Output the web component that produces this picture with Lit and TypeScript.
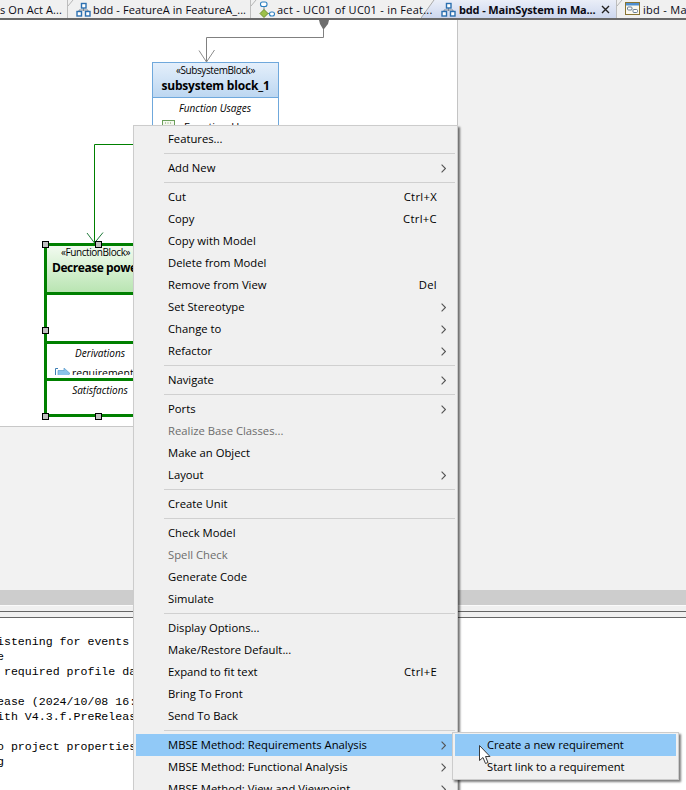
import { LitElement, html, css, svg } from "lit";
import { customElement } from "lit/decorators.js";

type Entry = { t?: string; k?: string; sub?: boolean; off?: boolean; hi?: boolean; sep?: boolean };

const MENU: Entry[] = [
  { t: "Features..." }, { sep: true },
  { t: "Add New", sub: true }, { sep: true },
  { t: "Cut", k: "Ctrl+X" }, { t: "Copy", k: "Ctrl+C" }, { t: "Copy with Model" },
  { t: "Delete from Model" }, { t: "Remove from View", k: "Del" },
  { t: "Set Stereotype", sub: true }, { t: "Change to", sub: true }, { t: "Refactor", sub: true }, { sep: true },
  { t: "Navigate", sub: true }, { sep: true },
  { t: "Ports", sub: true }, { t: "Realize Base Classes...", off: true }, { t: "Make an Object" }, { t: "Layout", sub: true }, { sep: true },
  { t: "Create Unit" }, { sep: true },
  { t: "Check Model" }, { t: "Spell Check", off: true }, { t: "Generate Code" }, { t: "Simulate" }, { sep: true },
  { t: "Display Options..." }, { t: "Make/Restore Default..." }, { t: "Expand to fit text", k: "Ctrl+E" },
  { t: "Bring To Front" }, { t: "Send To Back" }, { sep: true },
  { t: "MBSE Method: Requirements Analysis", sub: true, hi: true },
  { t: "MBSE Method: Functional Analysis", sub: true },
  { t: "MBSE Method: View and Viewpoint", sub: true },
];

const CONSOLE = [
  "istening for events",
  "e",
  " required profile da",
  "",
  "ease (2024/10/08 16:",
  "ith V4.3.f.PreReleas",
  "",
  "o project properties",
  "g",
];

const bddIcon = html`<svg class="ico" viewBox="0 0 15 15" width="15" height="15">
  <path d="M7.5 6v3M3 9.5V8h9v1.5" fill="none" stroke="#7a8794" stroke-width="1"/>
  <rect x="5.5" y="1.5" width="4.5" height="4.5" fill="#fff" stroke="#2b6fb0" stroke-width="1.4"/>
  <rect x="1" y="9.5" width="4.5" height="4.5" fill="#fff" stroke="#2b6fb0" stroke-width="1.4"/>
  <rect x="9.5" y="9.5" width="4.5" height="4.5" fill="#fff" stroke="#2b6fb0" stroke-width="1.4"/>
</svg>`;

const actIcon = html`<svg class="ico" viewBox="0 0 16 17" width="16" height="17">
  <path d="M5 5v4M8 12.5h3" stroke="#7a8794" fill="none"/>
  <rect x="1.5" y="1" width="6.5" height="4.5" rx="2" fill="#fff" stroke="#2b7fc0" stroke-width="1.1"/>
  <path d="M5 8.5 9 12.5 5 16.500 1 12.500Z" fill="#9cc04a" stroke="#6d8f2a"/>
  <rect x="10.500" y="11" width="5" height="4" rx="2" fill="#fff" stroke="#2b7fc0" stroke-width="1.1"/>
</svg>`;

const ibdIcon = html`<svg class="ico" viewBox="0 0 15 14" width="15" height="14">
  <rect x=".5" y=".5" width="14" height="12" fill="#fbf8ee" stroke="#8a7430"/>
  <rect x="1" y="1" width="13" height="2.500" fill="#4f8fd0"/>
  <rect x="2.500" y="5" width="4.500" height="3" rx="1" fill="#fff" stroke="#58708a" stroke-width=".9"/>
  <rect x="8" y="7.500" width="4.500" height="3" rx="1" fill="#fff" stroke="#58708a" stroke-width=".9"/>
</svg>`;

const chevron = svg`<path d="M.6.6 4.4 4.5.6 8.4" fill="none" stroke="#555" stroke-width="1.100"/>`;

@customElement("tab-strip")
class TabStrip extends LitElement {
  static styles = css`
    :host { display: flex; height: 18px; border-bottom: 2px solid #696969; background: #f0f0f0; overflow: hidden;
      font: 11px "Open Sans", sans-serif; letter-spacing: .08px; color: #0a0a14; white-space: nowrap; }
    .tab { position: relative; box-sizing: border-box; height: 18px; display: flex; align-items: center; flex: none; }
    .a { width: 67px; }
    .b { width: 183px; padding-left: 8px; border-left: 1px solid #bdbdbd; }
    .c { width: 171px; padding-left: 8px; border-left: 1px solid #bdbdbd; letter-spacing: .25px; z-index: 1; }
    .d { width: 195px; padding-left: 20px; font-weight: 700; letter-spacing: -.15px;
      background: linear-gradient(#eaeef8, #cdd7ee); }
    .e { flex: 1; padding-left: 8px; border-left: 1px solid #bdbdbd; overflow: hidden; letter-spacing: .3px; }
    .ico { flex: none; margin-right: 2px; }
    .d .ico, .e .ico { margin-right: 3px; }
    .x { margin-left: 5px; flex: none; }
    .tick { position: absolute; left: 0; top: 0; }
    .slant { position: absolute; left: 0; top: 0; }
  `;
  render() {
    const tick = html`<svg class="tick" width="6" height="7"><path d="M0 6 5 0" stroke="#b5b5b5" fill="none"/></svg>`;
    return html`
      <div class="tab a"><span>s On Act A...</span></div>
      <div class="tab b">${tick}${bddIcon}<span>bdd - FeatureA in FeatureA_...</span></div>
      <div class="tab c">${tick}${actIcon}<span>act - UC01 of UC01 - in Feat...</span></div>
      <div class="tab d">
        <svg class="slant" width="14" height="18"><path d="M0 0H13L0 18Z" fill="#f0f0f0"/><path d="M0 18 13 0" stroke="#a9a9a9" fill="none"/></svg>
        ${bddIcon}<span>bdd - MainSystem in Ma...</span>
        <svg class="x" width="9" height="9" viewBox="0 0 9 9"><path d="M1 1 8 8M8 1 1 8" stroke="#222" stroke-width="1.400"/></svg>
      </div>
      <div class="tab e">${tick}${ibdIcon}<span>ibd - MainSystem</span></div>
    `;
  }
}

@customElement("block-diagram")
class BlockDiagram extends LitElement {
  static styles = css`
    :host { display: block; position: relative; width: 457px; height: 406px; background: #fff; overflow: hidden;
      font-family: "Open Sans", sans-serif; color: #000; }
    .wires { position: absolute; left: 0; top: -20px; }
    .sub { position: absolute; left: 152px; top: 42px; width: 127px; height: 120px; box-sizing: border-box;
      border: 1px solid #6fa8dc; background: #fff; }
    .sub-head { height: 35px; box-sizing: border-box; border-bottom: 1px solid #6fa8dc; text-align: center;
      background: linear-gradient(#e4effb, #bdd7f1); padding-top: 1px; }
    .st { font-size: 10px; line-height: 12px; letter-spacing: -.42px; }
    .nm { font-size: 12px; font-weight: 700; line-height: 18px; letter-spacing: -.2px; white-space: nowrap; padding-top: 1px; }
    .cap { font-size: 10px; font-style: italic; line-height: 14px; text-align: center; letter-spacing: 0; padding-right: 1px; }
    .sub .cap { margin-top: 3px; }
    .usage { display: flex; align-items: flex-start; gap: 9px; padding: 5px 0 0 9px; font-size: 11px; line-height: 14px; }
    .fb { position: absolute; left: 44px; top: 223px; width: 110px; height: 174px; box-sizing: border-box;
      border: 3px solid #008000; border-right: 0; background: #fff; }
    .fb-head { height: 46px; box-sizing: border-box; text-align: center; white-space: nowrap; overflow: hidden;
      background: linear-gradient(#f2fbf0, #b9e5b2); }
    .fb-head .st { padding-right: 10px; line-height: 13px; }
    .fb-head .nm { text-align: left; padding: 0 0 0 5px; letter-spacing: -.45px; }
    .rule { height: 3px; background: #008000; }
    .gap { height: 46px; }
    .der { height: 34px; }
    .der-clip { height: 31px; overflow: hidden; }
    .der .cap { margin-top: 2px; }
    .req { display: flex; align-items: center; gap: 2px; padding: 6px 0 0 8px; font-size: 10.5px; line-height: 14px; }
    .sat { height: 33px; }
    .sat .cap { margin-top: 2px; }
    .h { position: absolute; box-sizing: border-box; width: 7px; height: 7px; background: #c0c0c0; border: 1px solid #000; }
    .h1 { left: 42px; top: 221px; } .h2 { left: 95px; top: 221px; } .h3 { left: 42px; top: 307px; }
    .h4 { left: 42px; top: 393px; } .h5 { left: 95px; top: 393px; }
  `;
  render() {
    return html`
      <div class="sub">
        <div class="sub-head"><div class="st">«SubsystemBlock»</div><div class="nm">subsystem block_1</div></div>
        <div class="cap">Function Usages</div>
        <div class="usage">
          <svg width="13" height="14" viewBox="0 0 13 14"><rect x=".5" y=".5" width="12" height="13" fill="#f4f8ee" stroke="#6a9e5a"/><path d="M3 3h1M5.500 3h1M8 3h1" stroke="#7a9a60"/></svg>
          <span>Function Usage</span>
        </div>
      </div>
      <div class="fb">
        <div class="fb-head"><div class="st">«FunctionBlock»</div><div class="nm">Decrease power</div></div>
        <div class="rule"></div>
        <div class="gap"></div>
        <div class="rule"></div>
        <div class="der"><div class="der-clip"><div class="cap">Derivations</div>
          <div class="req">
            <svg width="15" height="11" viewBox="0 0 15 11"><path d="M3 .5H.5v10H3" fill="none" stroke="#3f7fb5"/><path d="M3 2.500h6V0l6 5.500-6 5.500V8H3Z" fill="#8cc3ea" stroke="#5b9ccb" stroke-width=".7"/></svg>
            <span>requirement</span>
          </div>
        </div></div>
        <div class="rule"></div>
        <div class="sat"><div class="cap">Satisfactions</div></div>
      </div>
      <svg class="wires" width="457" height="260">
        <path d="M323.500 20V37.500H206.500V62" fill="none" stroke="#808080"/>
        <path d="M319 20H329L328 24 324 29H323L320 24Z" fill="#6e6e6e"/>
        <path d="M199 50.500 206.500 62 214.500 50" fill="none" stroke="#8c8c8c"/>
        <path d="M135 144.500H94.500V243" fill="none" stroke="#008000"/>
        <path d="M87 233 94.500 243 103 232.500" fill="none" stroke="#1f7a3a"/>
      </svg>
      <div class="h h1"></div><div class="h h2"></div><div class="h h3"></div><div class="h h4"></div><div class="h h5"></div>
    `;
  }
}

@customElement("app-root")
class AppRoot extends LitElement {
  static styles = css`
    :host { display: block; position: relative; width: 686px; height: 790px; overflow: hidden; background: #f1f1f1; }
    .top { display: flex; height: 570px; }
    .left { width: 457px; display: flex; flex-direction: column; flex: none; background: #f2f2f2; }
    .left .base { height: 1px; background: #c8c8c8; }
    .vline { width: 1px; background: #c4c4c4; height: 406px; }
    .band { height: 15px; background: #cdcdcd; }
    .rules { height: 13px; box-sizing: border-box; background: #f0f0f0; border-top: 1px solid #fafafa;
      display: flex; flex-direction: column; }
    .rules i { display: block; height: 5px; flex: none; }
    .rules b { display: block; height: 1px; background: #666; flex: none; }
    .console { height: 172px; background: #fff; box-sizing: border-box; padding: 16px 0 0; overflow: hidden;
      font: 11.6px/15px "Liberation Mono", monospace; color: #000; }
    .console div { height: 15px; margin-left: -3px; white-space: pre; }

    .menu { position: absolute; left: 133px; top: 125px; width: 325px; box-sizing: border-box; padding: 2px;
      background: #f0f0f0; border: 1px solid #cccccc; box-shadow: 2px 2px 2px rgba(0,0,0,.55);
      font: 11.27px "Open Sans", sans-serif; color: #000; }
    .item { height: 22px; box-sizing: border-box; padding: 0 0 1px 32px; display: flex; align-items: center; white-space: nowrap; }
    .item span { flex: 1; }
    .item em { font-style: normal; letter-spacing: .3px; }
    .slot { width: 18px; flex: none; display: flex; align-items: center; padding: 1px 0 0 4px; box-sizing: border-box; }
    .off { color: #6d6d6d; }
    .hi { background: #91c9f7; }
    .sep { height: 7px; padding: 3px 0 3px 28px; box-sizing: border-box; }
    .sep::after { content: ""; display: block; height: 1px; background: #d0d0d0; }
    .submenu { position: absolute; left: 452px; top: 732px; width: 227px; box-sizing: border-box; padding: 1px 2px;
      background: #f0f0f0; border: 1px solid #cccccc; box-shadow: 2px 2px 2px rgba(0,0,0,.5);
      font: 11.2px "Open Sans", sans-serif; color: #000; }
    .pointer { position: absolute; left: 479px; top: 745px; }
  `;
  render() {
    return html`
      <tab-strip></tab-strip>
      <div class="top">
        <div class="left">
          <block-diagram></block-diagram>
          <div class="base"></div>
        </div>
        <div class="vline"></div>
      </div>
      <div class="band"></div>
      <div class="rules"><i></i><b></b><i></i><b></b></div>
      <div class="console">${CONSOLE.map((l) => html`<div>${l}</div>`)}</div>

      <div class="menu">
        ${MENU.map((m) =>
          m.sep
            ? html`<div class="sep"></div>`
            : html`<div class="item ${m.off ? "off" : ""} ${m.hi ? "hi" : ""}">
                <span>${m.t}</span>${m.k ? html`<em>${m.k}</em>` : ""}
                <div class="slot">${m.sub ? html`<svg width="5" height="9">${chevron}</svg>` : ""}</div>
              </div>`
        )}
      </div>
      <div class="submenu">
        <div class="item hi"><span>Create a new requirement</span></div>
        <div class="item"><span>Start link to a requirement</span></div>
      </div>
      <svg class="pointer" width="14" height="20" viewBox="0 0 14 20">
        <path d="M.5.500V15.500L4 12.500 6.500 18.500 9 17.500 6.500 11.500H11Z" fill="#fff" stroke="#3a3a3a"/>
      </svg>
    `;
  }
}
